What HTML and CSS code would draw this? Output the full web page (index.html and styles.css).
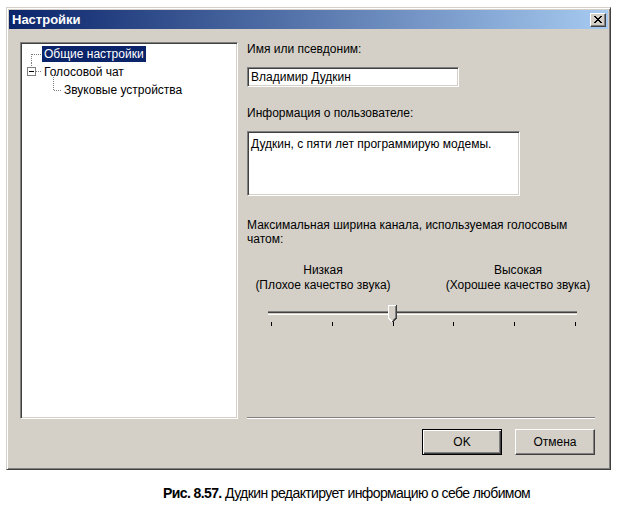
FILE: index.html
```html
<!DOCTYPE html>
<html lang="ru">
<head>
  <meta charset="UTF-8" />
  <title>Настройки</title>
  <link rel="stylesheet" href="styles.css">
</head>
<body>

<div class="window">
  <div class="titlebar">
    <span class="title">Настройки</span>
    <span class="close">
      <svg width="8" height="7" viewBox="0 0 8 7" shape-rendering="crispEdges">
        <path d="M0 0h2v1h-2zM6 0h2v1h-2zM1 1h2v1h-2zM5 1h2v1h-2zM2 2h4v1h-4zM3 3h2v1h-2zM2 4h4v1h-4zM1 5h2v1h-2zM5 5h2v1h-2zM0 6h2v1h-2zM6 6h2v1h-2z" fill="#000"/>
      </svg>
    </span>
  </div>

  <div class="client">
    <div class="main">
      <div class="tree">
        <div class="row">
          <svg class="gutter" width="20" height="18" shape-rendering="crispEdges">
            <line x1="9.5" y1="9" x2="9.5" y2="18" stroke="#808080" stroke-dasharray="1 1"/>
            <line x1="10" y1="9.5" x2="20" y2="9.5" stroke="#808080" stroke-dasharray="1 1"/>
          </svg>
          <span class="item selected">Общие настройки</span>
        </div>
        <div class="row">
          <svg class="gutter" width="20" height="18" shape-rendering="crispEdges">
            <line x1="9.5" y1="0" x2="9.5" y2="4" stroke="#808080" stroke-dasharray="1 1"/>
            <rect x="5.5" y="4.5" width="8" height="8" fill="#fff" stroke="#808080"/>
            <line x1="7" y1="8.5" x2="12" y2="8.5" stroke="#000"/>
            <line x1="14" y1="8.5" x2="20" y2="8.5" stroke="#808080" stroke-dasharray="1 1"/>
          </svg>
          <span class="item">Голосовой чат</span>
        </div>
        <div class="row">
          <svg class="gutter" width="40" height="18" shape-rendering="crispEdges">
            <line x1="31.5" y1="-6" x2="31.5" y2="9" stroke="#808080" stroke-dasharray="1 1"/>
            <line x1="32" y1="9.5" x2="40" y2="9.5" stroke="#808080" stroke-dasharray="1 1"/>
          </svg>
          <span class="item">Звуковые устройства</span>
        </div>
      </div>

      <div class="panel">
        <div class="label">Имя или псевдоним:</div>
        <div class="field">Владимир Дудкин</div>

        <div class="label second">Информация о пользователе:</div>
        <div class="memo">Дудкин, с пяти лет программирую модемы.</div>

        <div class="label third">Максимальная ширина канала, используемая голосовым<br>чатом:</div>

        <div class="scale-labels">
          <div>Низкая<br>(Плохое качество звука)</div>
          <div>Высокая<br>(Хорошее качество звука)</div>
        </div>

        <div class="slider">
          <div class="track"></div>
          <svg class="thumb" width="9" height="17" viewBox="0 0 9 17" shape-rendering="crispEdges">
            <path d="M0 0H8V13L4 17L0 13Z" fill="#d4d0c8"/>
            <path d="M0.5 13V0.5H8" fill="none" stroke="#fff"/>
            <path d="M8.5 0V13L4.5 17" fill="none" stroke="#404040"/>
            <path d="M7.5 1V12.5L4.5 15.5" fill="none" stroke="#808080"/>
            <path d="M0.5 13L4 16.5" fill="none" stroke="#fff"/>
          </svg>
          <div class="ticks"><i></i><i></i><i></i><i></i><i></i><i></i></div>
        </div>

        <div class="sep"></div>
      </div>
    </div>

    <div class="buttons">
      <button class="btn default">OK</button>
      <button class="btn">Отмена</button>
    </div>
  </div>
</div>

<p class="caption"><b>Рис. 8.57.</b> Дудкин редактирует информацию о себе любимом</p>

</body>
</html>
```

FILE: styles.css
```css
body {
  margin: 0;
  background-color: #fff;
  font-family: "Liberation Sans", Arial, sans-serif;
  color: #000;
}

.window {
  margin: 7px 0 0 6px;
  width: 605px;
  height: 463px;
  box-sizing: border-box;
  background-color: #d4d0c8;
  border: 1px solid;
  border-color: #d4d0c8 #404040 #404040 #d4d0c8;
  box-shadow: inset 1px 1px #fff, inset -1px -1px #808080;
  padding: 2px;
  display: flex;
  flex-direction: column;
}

.titlebar {
  height: 19px;
  flex: none;
  display: flex;
  justify-content: space-between;
  align-items: center;
  padding: 0 2px 0 3px;
  background: linear-gradient(to right, #0a246a, #a6caf0);
}

.title {
  color: #fff;
  font-weight: bold;
  font-size: 13px;
}

.close {
  width: 16px;
  height: 14px;
  box-sizing: border-box;
  display: flex;
  justify-content: center;
  align-items: center;
  background-color: #d4d0c8;
  border: 1px solid;
  border-color: #fff #404040 #404040 #fff;
  box-shadow: inset -1px -1px #808080;
}

.client {
  flex: 1;
  padding: 13px 13px 0 11px;
}

.main {
  display: flex;
  gap: 9px;
  height: 377px;
}

.tree {
  width: 218px;
  flex: none;
  box-sizing: border-box;
  background-color: #fff;
  border: 1px solid;
  border-color: #808080 #fff #fff #808080;
  box-shadow: inset 1px 1px #404040, inset -1px -1px #d4d0c8;
  padding: 2px 0 0 1px;
  font-size: 12px;
}

.row {
  display: flex;
  align-items: center;
  height: 18px;
}

.gutter {
  flex: none;
  overflow: visible;
}

.item {
  padding: 0 2px;
  line-height: 16px;
}

.item.selected {
  background-color: #0a246a;
  color: #fff;
}

.panel {
  flex: 1;
  display: flex;
  flex-direction: column;
  font-size: 12px;
}

.label {
  line-height: 14px;
}

.label.second {
  margin-top: 19px;
}

.label.third {
  margin-top: 22px;
}

.field,
.memo {
  box-sizing: border-box;
  margin-top: 11px;
  background-color: #fff;
  border: 1px solid;
  border-color: #808080 #fff #fff #808080;
  box-shadow: inset 1px 1px #404040, inset -1px -1px #d4d0c8;
  line-height: 14px;
}

.field {
  width: 212px;
  height: 20px;
  padding: 2px 3px;
}

.memo {
  width: 273px;
  height: 65px;
  padding: 5px 3px;
}

.scale-labels {
  margin-top: 17px;
  width: 347px;
  display: flex;
  justify-content: space-between;
  line-height: 15px;
  text-align: center;
}

.scale-labels div {
  width: 152px;
}

.slider {
  position: relative;
  margin: 18px 0 0 21px;
  width: 309px;
}

.track {
  height: 4px;
  box-sizing: border-box;
  border-top: 1px solid #808080;
  border-bottom: 1px solid #fff;
  background-color: #d4d0c8;
  box-shadow: inset 0 1px #404040;
}

.thumb {
  position: absolute;
  left: 120px;
  top: -6px;
}

.ticks {
  display: flex;
  justify-content: space-between;
  height: 4px;
  margin-top: 7px;
  padding: 0 1px 0 3px;
}

.ticks i {
  width: 1px;
  background-color: #000;
}

.sep {
  margin-top: auto;
  height: 2px;
  box-sizing: border-box;
  border-top: 1px solid #808080;
  border-bottom: 1px solid #fff;
}

.buttons {
  display: flex;
  justify-content: flex-end;
  gap: 13px;
  margin-top: 10px;
}

.btn {
  width: 80px;
  height: 26px;
  padding: 0;
  font-family: "Liberation Sans", Arial, sans-serif;
  font-size: 12px;
  color: #000;
  background-color: #d4d0c8;
  border: 1px solid;
  border-color: #fff #404040 #404040 #fff;
  box-shadow: inset -1px -1px #808080;
}

.btn.default {
  border: 1px solid #000;
  box-shadow: inset 1px 1px #fff, inset -1px -1px #404040, inset -2px -2px #808080;
}

.caption {
  margin: 14px 0 0;
  padding-left: 163px;
  font-size: 14px;
  letter-spacing: -0.6px;
  line-height: 18px;
}
```
